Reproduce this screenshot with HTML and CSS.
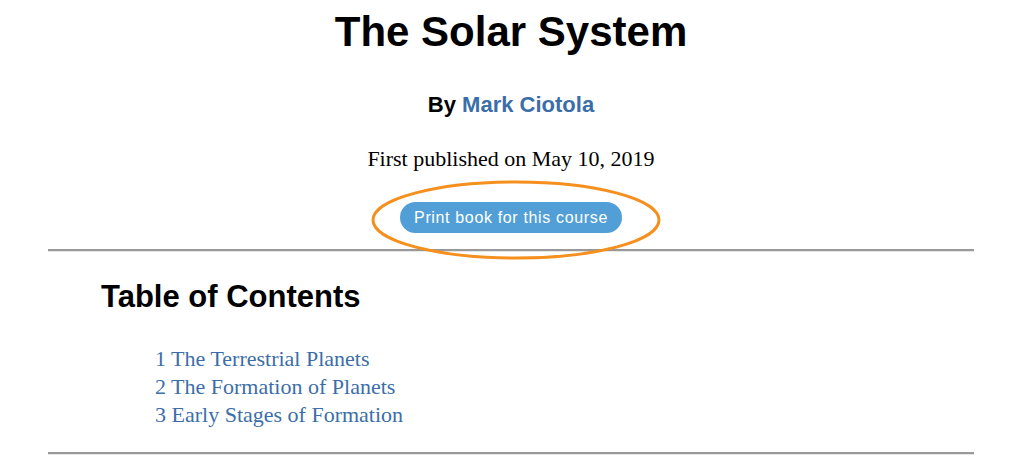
FILE: index.html
```html
<!DOCTYPE html>
<html lang="en">
<head>
<meta charset="utf-8">
<title>The Solar System</title>
<link rel="stylesheet" href="styles.css">
</head>
<body>
<div class="page">
  <header class="head">
    <h1 class="title">The Solar System</h1>
    <p class="byline">By <a href="#" class="author">Mark Ciotola</a></p>
    <p class="published">First published on May 10, 2019</p>
    <div class="print-wrap">
      <a href="#" class="print-btn">Print book for this course</a>
      <svg class="highlight" width="292" height="82" viewBox="0 0 292 82" aria-hidden="true">
        <ellipse cx="146" cy="41" rx="143" ry="38" fill="none" stroke="#f5901f" stroke-width="3"/>
      </svg>
    </div>
  </header>
  <hr class="rule">
  <section class="toc">
    <h2 class="toc-title">Table of Contents</h2>
    <ul class="toc-list">
      <li><a href="#">1 The Terrestrial Planets</a></li>
      <li><a href="#">2 The Formation of Planets</a></li>
      <li><a href="#">3 Early Stages of Formation</a></li>
    </ul>
  </section>
  <hr class="rule">
</div>
</body>
</html>
```

FILE: styles.css
```css
html, body {
  margin: 0;
  padding: 0;
  background: #ffffff;
}

.page {
  padding: 0 50px 0 48px;
  font-family: "Liberation Serif", "Times New Roman", serif;
  color: #000;
}

.head {
  display: flex;
  flex-direction: column;
  align-items: center;
}

.title {
  margin: 0;
  padding-top: 8px;
  font-family: "Liberation Sans", Arial, sans-serif;
  font-weight: bold;
  font-size: 42px;
  line-height: 48px;
}

.byline {
  margin: 37px 0 0;
  font-family: "Liberation Sans", Arial, sans-serif;
  font-weight: bold;
  font-size: 22px;
  line-height: 24px;
}

.author {
  color: #3b6ea8;
  text-decoration: none;
}

.published {
  margin: 30px 0 0;
  font-size: 22px;
  line-height: 24px;
}

.print-wrap {
  position: relative;
  margin-top: 31px;
  display: flex;
  justify-content: center;
}

.print-btn {
  display: block;
  height: 31px;
  line-height: 31px;
  padding: 0 14px;
  border-radius: 16px;
  background: #529fd7;
  color: #ffffff;
  font-family: "Liberation Sans", Arial, sans-serif;
  font-size: 16px;
  letter-spacing: 0.65px;
  text-decoration: none;
}

.highlight {
  position: absolute;
  left: 50%;
  top: 50%;
  margin-left: -141px;
  margin-top: -39px;
}

.rule {
  margin: 16px 0 0;
  height: 0;
  border: 0;
  border-top: 2px solid #999999;
  border-bottom: 1px solid #e6e6e6;
}

.toc {
  padding: 0 0 0 53px;
}

.toc-title {
  margin: 26px 0 0;
  font-family: "Liberation Sans", Arial, sans-serif;
  font-weight: bold;
  font-size: 31px;
  line-height: 37px;
}

.toc-list {
  list-style: none;
  margin: 30px 0 0;
  padding: 0 0 0 54px;
}

.toc-list li {
  font-size: 22px;
  line-height: 28px;
}

.toc-list a {
  color: #3b6ea8;
  text-decoration: none;
}

.toc + .rule {
  margin-top: 23px;
}
```
